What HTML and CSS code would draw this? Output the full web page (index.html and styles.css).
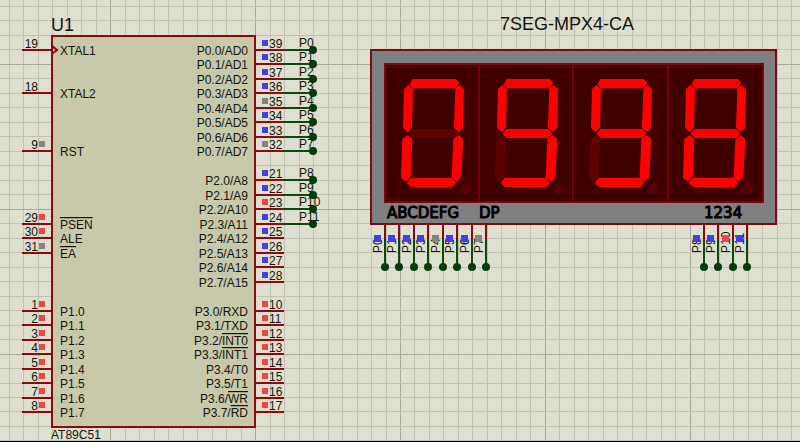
FILE: index.html
```html
<!DOCTYPE html>
<html lang="en">
<head>
<meta charset="utf-8">
<title>Schematic: AT89C51 with 7SEG-MPX4-CA</title>
<link rel="stylesheet" href="styles.css">
</head>
<body>
<main>
<svg class="sheet" viewBox="0 0 800 442" role="img" aria-label="AT89C51 driving a four digit display">
  <g id="grid"></g>

  <g id="chip">
    <text class="title" x="51" y="31">U1</text>
    <rect class="chip-body" x="52" y="36" width="203" height="391"/>
    <path class="pin clock" d="M52 46L57 50L52 54"/>
    <text class="label" x="51" y="439">AT89C51</text>
  </g>

  <g id="display">
    <text class="title" x="500" y="30">7SEG-MPX4-CA</text>
    <rect class="bezel" x="371" y="50" width="405" height="174"/>
    <rect class="glass" x="385" y="64" width="378" height="138"/>
    <path class="divider" d="M479 64V202M573 64V202M668 64V202"/>
    <text class="legend" x="387" y="218">ABCDEFG</text>
    <text class="legend" x="479" y="218">DP</text>
    <text class="legend" x="704" y="218">1234</text>
  </g>
  <path class="sheet-edge" d="M0 441H800V442H0Z"/>
</svg>
</main>
<script src="schematic.js"></script>
</body>
</html>
```
FILE: styles.css
```css
body {
  margin: 0;
  background: #dfdfcf;
}

.sheet {
  display: block;
  width: 100%;
  font-family: "Liberation Sans", Arial, sans-serif;
}

.grid-line {
  stroke: #c2c2b3;
  stroke-width: 1;
}

.grid-line.major {
  stroke: #a9a99a;
}

.sheet-edge {
  fill: #000;
}

.title {
  font-size: 18px;
  fill: #14140c;
}

.label {
  font-size: 12px;
  fill: #14140c;
}

.end {
  text-anchor: end;
}

.inverted {
  text-decoration: overline;
}

.legend {
  font-family: "DejaVu Sans", sans-serif;
  font-size: 15px;
  fill: #000;
  stroke: #000;
  stroke-width: 1;
}

.chip-body {
  fill: #c8c8aa;
  stroke: #8c0a0e;
  stroke-width: 2;
}

.pin {
  fill: none;
  stroke: #8c0a0e;
  stroke-width: 2;
}

.wire {
  stroke: #0a4a10;
  stroke-width: 2;
}

.terminal {
  fill: #063c0a;
}

.low {
  fill: #4040e6;
}

.high {
  fill: #ee4444;
}

.floating {
  fill: #858580;
}

.bezel {
  fill: #808080;
  stroke: #7c0a12;
  stroke-width: 2;
}

.glass {
  fill: #400000;
  stroke: #84000e;
  stroke-width: 2;
}

.divider {
  stroke: #74000a;
  stroke-width: 2;
}

.segment {
  fill: #5c0000;
}

.segment.lit {
  fill: #ff0000;
}

.point {
  fill: #580000;
}
```
FILE: schematic.js
```js
const PITCH = 391 / 27;
const NS = "http://www.w3.org/2000/svg";
const STATES = { L: "low", H: "high", Z: "floating" };

function add(parent, tag, attrs, text) {
  const el = document.createElementNS(NS, tag);
  for (const key in attrs) el.setAttribute(key, attrs[key]);
  if (text) el.textContent = text;
  parent.appendChild(el);
  return el;
}

const grid = document.getElementById("grid");
const chip = document.getElementById("chip");
const display = document.getElementById("display");

function gridLine(d, major) {
  add(grid, "path", { class: major ? "grid-line major" : "grid-line", d: d });
}
for (let i = 0; i < 55; i++) {
  gridLine("M" + (Math.round(9 + i * PITCH) + 0.5) + " 0V442", i % 10 === 7);
}
for (let i = 0; i < 31; i++) {
  gridLine("M0 " + (Math.round(7 + i * PITCH) - 0.5) + "H800", i % 10 === 4);
}

// A name such as "P3.2/~INT0" has an overline on the part after "~".
function pinName(x, y, cls, name) {
  const parts = name.split("~");
  const text = add(chip, "text", { class: cls, x: x, y: y }, parts[0]);
  if (parts[1]) add(text, "tspan", { class: "inverted" }, parts[1]);
}

// row, number, name, state
const leftPins = [
  [0, 19, "XTAL1"], [3, 18, "XTAL2"], [7, 9, "RST", "Z"],
  [12, 29, "~PSEN", "H"], [13, 30, "ALE", "H"], [14, 31, "~EA", "Z"]
];
for (let i = 0; i < 8; i++) leftPins.push([18 + i, 1 + i, "P1." + i, "H"]);

for (const [row, number, name, state] of leftPins) {
  const y = Math.round(50 + row * PITCH);
  add(chip, "path", { class: "pin", d: "M22 " + y + "H52" });
  if (state) add(chip, "rect", { class: STATES[state], x: 39, y: y - 10, width: 6, height: 6 });
  add(chip, "text", { class: "label end", x: 38, y: y - 2 }, String(number));
  pinName(60, y + 5, "label", name);
}

// row, number, name, state, net
const rightPins = [];
"LLLLZLLZ".split("").forEach((s, i) =>
  rightPins.push([i, 39 - i, "P0." + i + "/AD" + i, s, "P" + i]));
"LLHLLLLL".split("").forEach((s, i) =>
  rightPins.push([9 + i, 21 + i, "P2." + i + "/A" + (8 + i), s, i < 4 ? "P" + (8 + i) : ""]));
["RXD", "TXD", "~INT0", "~INT1", "T0", "T1", "~WR", "~RD"].forEach((f, i) =>
  rightPins.push([18 + i, 10 + i, "P3." + i + "/" + f, "H", ""]));

for (const [row, number, name, state, net] of rightPins) {
  const y = Math.round(50 + row * PITCH);
  add(chip, "path", { class: "pin", d: "M255 " + y + "H284" });
  add(chip, "rect", { class: STATES[state], x: 262, y: y - 10, width: 6, height: 6 });
  add(chip, "text", { class: "label", x: 269, y: y - 2 }, String(number));
  pinName(248, y + 5, "label end", name);
  if (net) {
    add(chip, "path", { class: "wire", d: "M284 " + y + "H313" });
    add(chip, "circle", { class: "terminal", cx: 313, cy: y, r: 4 });
    add(chip, "text", { class: "label", x: 299, y: y - 3 }, net);
  }
}

// Segment outlines, three units to a pixel.
const SEGMENTS = {
  a: "158,117 288,117 298,130 287,145 159,145 148,134",
  b: "299,135 312,148 309,264 296,276 282,264 286,146",
  c: "296,285 310,297 304,412 290,425 275,413 280,297",
  d: "153,413 277,413 288,428 277,441 153,441 140,428",
  e: "143,285 157,297 152,410 138,425 123,413 127,297",
  f: "145,134 159,147 156,262 143,276 129,264 132,148",
  g: "145,281 158,267 283,267 296,281 282,294 158,294"
};
["abcdef", "abcdfg", "abcdfg", "abcdefg"].forEach((lit, i) => {
  const g = add(display, "g", { transform: "translate(" + (360 + 94 * i) + " 40) scale(" + 1 / 3 + ")" });
  for (const key of Object.keys(SEGMENTS).sort((a, b) => lit.includes(a) - lit.includes(b))) {
    add(g, "polygon", { class: lit.includes(key) ? "segment lit" : "segment", points: SEGMENTS[key] });
  }
  add(g, "circle", { class: "point", cx: 316, cy: 446, r: 15 });
});

function displayPins(start, first, states) {
  states.split("").forEach((s, i) => {
    const x = Math.round(start + i * PITCH);
    add(display, "path", { class: "pin", d: "M" + x + " 225V240" });
    add(display, "path", { class: "wire", d: "M" + x + " 240V267" });
    add(display, "circle", { class: "terminal", cx: x, cy: 267, r: 4 });
    add(display, "text", { class: "label", transform: "translate(" + (x - 3) + " 253) rotate(-90)" }, "P" + (first + i));
    add(display, "rect", { class: STATES[s], x: x - 11, y: 235, width: 7, height: 7 });
  });
}
displayPins(385, 0, "LLLLZLLZ");
displayPins(704, 8, "LLHL");
```
